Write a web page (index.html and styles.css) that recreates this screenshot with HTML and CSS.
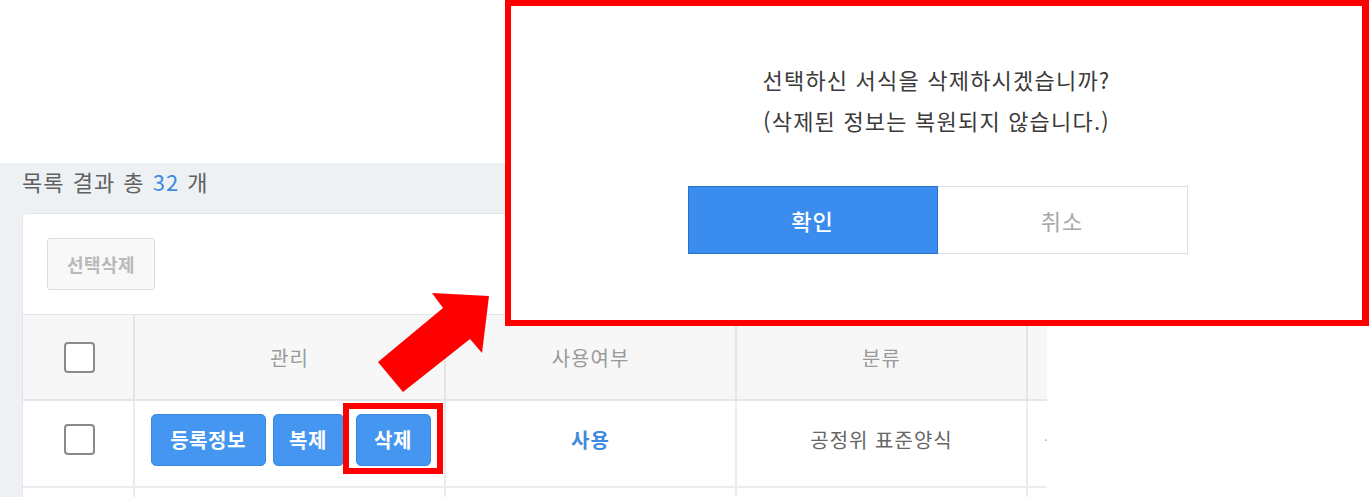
FILE: index.html
```html
<!DOCTYPE html>
<html lang="ko">
<head>
<meta charset="utf-8">
<link rel="stylesheet" href="styles.css">
</head>
<body>
<div class="page">
  <div class="title">목록 결과 총 <span class="count">32</span> 개</div>
  <div class="card">
    <div class="toolbar">
      <button class="btn-ghost">선택삭제</button>
    </div>
    <div class="table">
      <div class="row head">
        <div class="cell c1"><span class="check"></span></div>
        <div class="cell c2">관리</div>
        <div class="cell c3">사용여부</div>
        <div class="cell c4">분류</div>
        <div class="cell c5"></div>
      </div>
      <div class="row body">
        <div class="cell c1"><span class="check"></span></div>
        <div class="cell c2">
          <div class="actions">
            <button class="btn-blue w-reg">등록정보</button>
            <button class="btn-blue w-copy">복제</button>
            <button class="btn-blue w-del">삭제</button>
          </div>
        </div>
        <div class="cell c3"><span class="use">사용</span></div>
        <div class="cell c4">공정위 표준양식</div>
        <div class="cell c5"><span class="clip">·</span></div>
      </div>
      <div class="row body short">
        <div class="cell c1"></div>
        <div class="cell c2"></div>
        <div class="cell c3"></div>
        <div class="cell c4"></div>
        <div class="cell c5"></div>
      </div>
    </div>
  </div>
</div>

<div class="highlight"></div>

<svg class="arrow" width="130" height="110" viewBox="370 285 130 110">
  <polygon points="432,293 489,296 482,353 470,339 403,392 378,362 443,308" fill="#ff0000"/>
</svg>

<div class="modal">
  <div class="modal-text">
    <p>선택하신 서식을 삭제하시겠습니까?</p>
    <p>(삭제된 정보는 복원되지 않습니다.)</p>
  </div>
  <div class="modal-actions">
    <button class="m-ok">확인</button>
    <button class="m-cancel">취소</button>
  </div>
</div>
</body>
</html>
```

FILE: styles.css
```css
* { box-sizing: border-box; }
html, body {
  margin: 0;
  padding: 0;
}
body {
  width: 1369px;
  height: 497px;
  overflow: hidden;
  background: #ffffff;
  position: relative;
  font-family: "Noto Sans CJK KR", "Noto Sans", sans-serif;
}
button {
  font-family: inherit;
  cursor: pointer;
}

.page {
  margin-top: 163px;
  width: 1047px;
  height: 334px;
  background: #eef1f4;
  overflow: hidden;
  padding-left: 22px;
}
.title {
  padding-top: 3px;
  height: 50px;
  font-size: 22px;
  line-height: 30px;
  color: #606060;
  letter-spacing: 1px;
  word-spacing: 1px;
}
.count { color: #3f8ae0; }

.card {
  width: 1200px;
  background: #fff;
  border: 1px solid #e2e5e9;
  border-radius: 4px;
}
.toolbar {
  padding: 24px 24px 24px 24px;
}
.btn-ghost {
  width: 108px;
  height: 52px;
  background: #f8f8f8;
  border: 1px solid #dedede;
  border-radius: 3px;
  color: #b9b9b9;
  font-size: 18px;
  font-weight: 700;
  letter-spacing: 0.5px;
  padding: 0;
}

.table { border-top: 1px solid #e4e4e4; }
.row { display: flex; }
.row.head { height: 86px; background: #f7f7f7; border-bottom: 2px solid #e6e6e6; }
.row.body { height: 87px; border-bottom: 2px solid #ececec; }
.row.body .cell { padding-bottom: 8px; }
.row.short { height: 20px; }
.cell {
  display: flex;
  align-items: center;
  justify-content: center;
  border-right: 2px solid #ececec;
  font-size: 20px;
  letter-spacing: 1px;
}
.head .cell { color: #9a9a9a; border-right-color: #e4e4e4; }
.body .cell { color: #666; }
.c1 { width: 112px; }
.c2 { width: 311px; }
.c3 { width: 291px; }
.c4 { width: 291px; }
.c5 { flex: 1; border-right: none; justify-content: flex-start; padding-left: 16px; }
.clip { color: #aaa; font-size: 12px; }

.check {
  width: 31px;
  height: 31px;
  border: 2px solid #8a8a8a;
  border-radius: 4px;
  background: #fff;
  margin-left: 2px;
}

.actions { display: flex; padding-left: 2px; }
.btn-blue {
  height: 52px;
  border: 1px solid #3b86e0;
  border-radius: 5px;
  background: #4596f0;
  color: #fff;
  font-size: 20px;
  font-weight: 700;
  letter-spacing: 0.5px;
  padding: 0;
}
.w-reg { width: 115px; }
.w-copy { width: 71px; margin-left: 7px; }
.w-del { width: 75px; margin-left: 12px; }

.use { color: #3f8ae0; font-weight: 700; }

.highlight {
  position: absolute;
  left: 343px;
  top: 403px;
  width: 100px;
  height: 71px;
  border: 6px solid #ff0000;
}
.arrow {
  position: absolute;
  left: 370px;
  top: 285px;
}

.modal {
  position: absolute;
  left: 505px;
  top: 0;
  width: 864px;
  height: 326px;
  border: 6px solid #ff0000;
  border-right-width: 7px;
  background: #fff;
  display: flex;
  flex-direction: column;
  align-items: center;
  padding-top: 53px;
}
.modal-text {
  text-align: center;
  color: #3a3a3a;
  font-size: 22px;
  line-height: 41px;
  letter-spacing: 1.2px;
}
.modal-text p { margin: 0; }
.modal-actions {
  display: flex;
  margin-top: 45px;
  margin-left: 2px;
}
.m-ok, .m-cancel {
  width: 250px;
  height: 68px;
  font-size: 22px;
  letter-spacing: 1px;
  padding: 0;
}
.m-ok {
  background: #3b8cef;
  border: 1px solid #2c6ed0;
  color: #fff;
  font-weight: 500;
}
.m-cancel {
  background: #fff;
  border: 1px solid #dcdfe3;
  border-left: none;
  color: #a8a8a8;
}
```
